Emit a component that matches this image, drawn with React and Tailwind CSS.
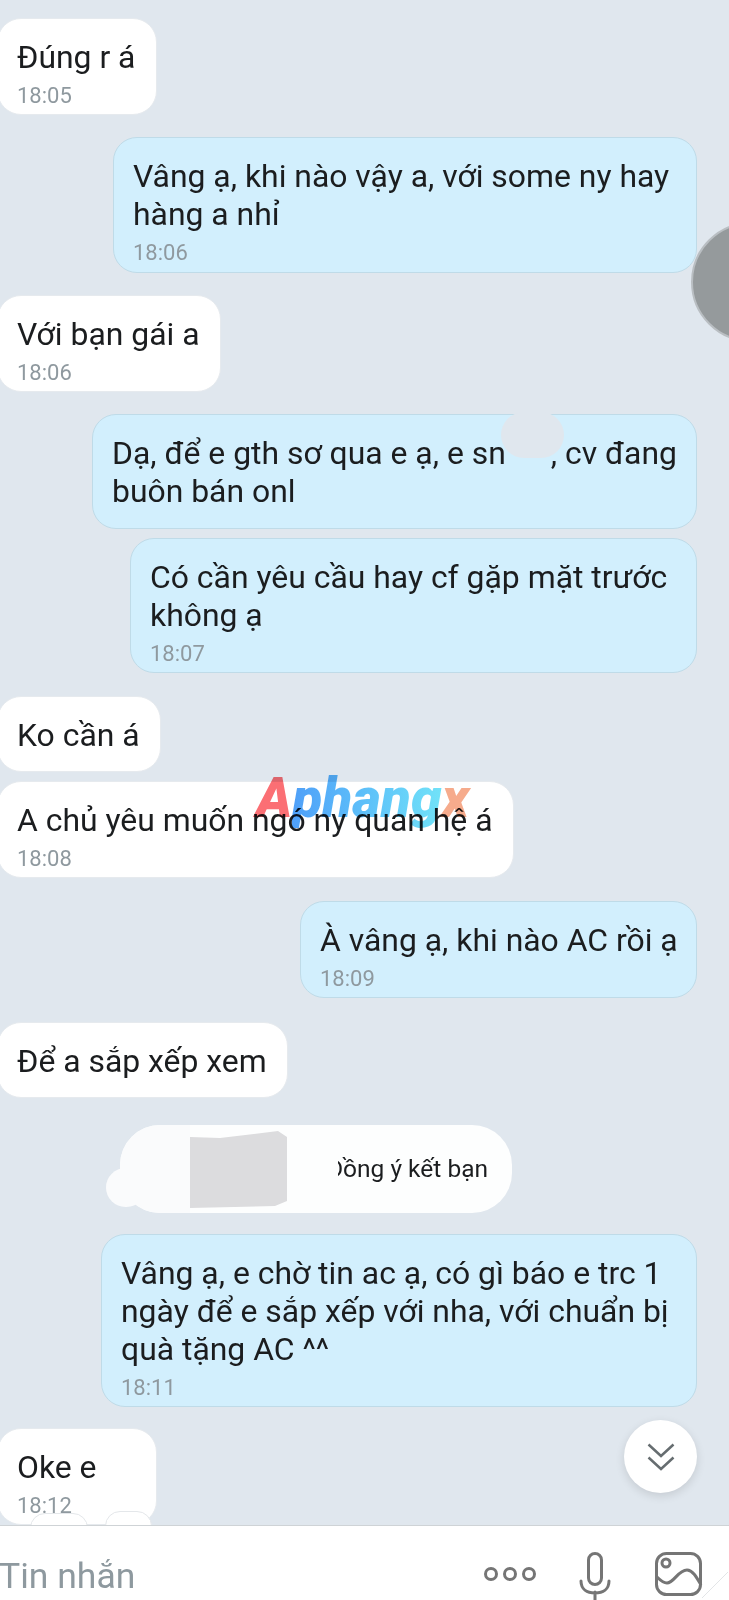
import React from "react";

const font = { fontFamily: "Roboto, sans-serif" };

function Bubble({ mine, time, className = "", children }) {
  const side = mine
    ? "self-end mr-[32px] bg-[#d2effd] border-[#bfdbe8] pl-[19px] pr-[16px]"
    : "self-start -ml-[3px] bg-white border-[#e6eaee] pl-[19px] pr-[20px]";
  return (
    <div
      className={`relative whitespace-nowrap rounded-[24px] border pt-[19px] text-[31.9px] leading-[38px] text-[#1b1d1f] ${
        time ? "pb-[6px]" : "pb-[17px]"
      } ${side} ${className}`}
    >
      <div>{children}</div>
      {time && (
        <div className="mt-[8px] text-[22px] leading-[24px] text-[#8f999f]">
          {time}
        </div>
      )}
    </div>
  );
}

function Watermark() {
  return (
    <div className="absolute left-[256px] top-[768px] z-10 flex whitespace-nowrap text-[55px] leading-[60px] font-black italic mix-blend-multiply">
      <span className="text-[#fb6f74]">A</span>
      <span className="bg-gradient-to-r from-[#4f9ff8] to-[#72e4f8] bg-clip-text pr-[4px] text-transparent">
        phang
      </span>
      <span className="-ml-[4px] text-[#f6ab8c]">x</span>
    </div>
  );
}

function BottomBar() {
  return (
    <div className="absolute inset-x-0 top-[1525px] z-20 flex h-[75px] items-start overflow-hidden border-t border-[#cfd3d6] bg-white">
      <span className="-ml-[1px] mt-[29px] text-[35.5px] leading-[42px] text-[#8e999f]">
        Tin nhắn
      </span>
      <svg
        className="absolute left-[480px] top-0"
        width="249"
        height="75"
        viewBox="0 0 249 75"
        fill="none"
        stroke="#757575"
        strokeWidth="3"
      >
        <circle cx="11" cy="48" r="5.5" />
        <circle cx="30" cy="48" r="5.5" />
        <circle cx="49" cy="48" r="5.5" />
        <rect x="108.5" y="27.5" width="13" height="31" rx="6.5" />
        <path d="M101 55c0 8 6 12 14 12s14-4 14-12M115 66v9" strokeLinecap="round" />
        <rect x="176.5" y="27.5" width="44" height="41" rx="10" />
        <circle cx="186" cy="37" r="4" />
        <path d="M177 51c4 4 7 6 10 6 7 0 11-13 20-13 6 0 10 8 14 15" />
        <path d="M222 72l26-26" stroke="#e3e5e7" strokeWidth="1" />
      </svg>
    </div>
  );
}

export default function App() {
  return (
    <div
      className="relative flex h-[1600px] w-[729px] flex-col overflow-hidden bg-[#e0e7ee] pt-[18px]"
      style={font}
    >
      <Bubble time="18:05" className="w-[160px]">
        Đúng r á
      </Bubble>
      <Bubble mine time="18:06" className="mt-[22px] min-h-[136px] w-[584px]">
        Vâng ạ, khi nào vậy a, với some ny hay
        <br />
        hàng a nhỉ
      </Bubble>
      <Bubble time="18:06" className="mt-[22px]">
        Với bạn gái a
      </Bubble>
      <Bubble mine className="mt-[22px] min-h-[115px] w-[605px]">
        Dạ, để e gth sơ qua e ạ, e sn
        <span className="inline-block w-[45px]" />, cv đang
        <br />
        buôn bán onl
        <div className="absolute left-[408px] -top-[3px] h-[46px] w-[63px] rounded-[24px] bg-[#e0e7ee]" />
      </Bubble>
      <Bubble mine time="18:07" className="mt-[9px] w-[567px]">
        Có cần yêu cầu hay cf gặp mặt trước
        <br />
        không ạ
      </Bubble>
      <Bubble className="mt-[23px]">Ko cần á</Bubble>
      <Bubble time="18:08" className="mt-[9px]">
        A chủ yêu muốn ngó ny quan hệ á
      </Bubble>
      <Bubble mine time="18:09" className="mt-[23px] w-[397px]">
        À vâng ạ, khi nào AC rồi ạ
      </Bubble>
      <Bubble className="mt-[24px]">Để a sắp xếp xem</Bubble>

      <div className="relative ml-[120px] mt-[27px] flex h-[88px] w-[392px] items-center justify-end rounded-[40px] bg-[#fdfefe] pr-[24px] text-[24.5px] text-[#1b1d1f]">
        Đồng ý kết bạn
        <div className="absolute left-0 top-0 h-[88px] w-[70px] rounded-l-[40px] bg-[#fafbfc]" />
        <div className="absolute left-[70px] top-[6px] h-[77px] w-[97px] bg-[#dcdcde] [clip-path:polygon(0_6px,30px_7px,88px_0,97px_6px,97px_70px,85px_75px,0_77px)]" />
        <div className="absolute -left-[14px] top-[43px] h-[39px] w-[40px] rounded-full bg-[#fafbfc]" />
        <div className="absolute left-[167px] top-[10px] h-[68px] w-[51px] bg-[#fdfefe]" />
      </div>

      <Bubble mine time="18:11" className="mt-[21px] w-[596px]">
        Vâng ạ, e chờ tin ac ạ, có gì báo e trc 1
        <br />
        ngày để e sắp xếp với nha, với chuẩn bị
        <br />
        quà tặng AC ^^
      </Bubble>
      <Bubble time="18:12" className="mt-[21px] w-[160px]">
        Oke e
      </Bubble>

      <div className="absolute left-[691px] top-[222px] h-[120px] w-[120px] rounded-full border-2 border-[#b9bec2] bg-[#959a9c]" />

      <div className="absolute left-[30px] top-[1513px] h-[30px] w-[58px] rounded-full border border-[#e4e7ea] bg-white" />
      <div className="absolute left-[105px] top-[1511px] h-[30px] w-[47px] rounded-full border border-[#e4e7ea] bg-white" />

      <Watermark />

      <button className="absolute left-[624px] top-[1420px] flex h-[73px] w-[73px] items-center justify-center rounded-full bg-white shadow-[0_3px_10px_rgba(0,0,0,0.12)]">
        <svg width="28" height="28" viewBox="0 0 28 28" fill="none" stroke="#666d70" strokeWidth="2.5">
          <path d="M1.5 1.5L14 13 26.5 1.5M1.5 14.5L14 26 26.5 14.5" />
        </svg>
      </button>

      <BottomBar />
    </div>
  );
}
